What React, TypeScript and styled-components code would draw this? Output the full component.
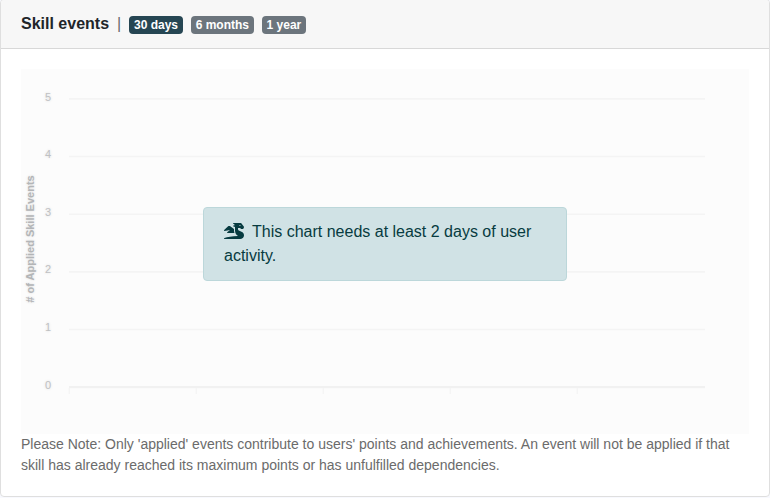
import React from 'react';
import styled, { createGlobalStyle } from 'styled-components';
import { FaDragon } from 'react-icons/fa';

const GlobalStyle = createGlobalStyle`
  *, *::before, *::after { box-sizing: border-box; }
  html { background: #f8f9fe; }
  body {
    margin: 0;
    overflow: hidden;
    font-family: "Liberation Sans", Arial, sans-serif;
    font-size: 16px;
    line-height: 24px;
    color: #212529;
  }
`;

const Card = styled.section`
  margin-top: -1px;
  height: 498px;
  display: flex;
  flex-direction: column;
  background: #fff;
  border: 1px solid #dfdfdf;
  border-radius: 4px;
  overflow: hidden;
`;

const Header = styled.header`
  display: flex;
  align-items: center;
  height: 49px;
  flex: none;
  padding: 0 20px 1px;
  background: #f7f7f7;
  border-bottom: 1px solid #d8d8d8;
`;

const Title = styled.h1`
  margin: 0;
  font-size: 16px;
  line-height: 24px;
  font-weight: 700;
`;

const Divider = styled.span`
  margin: 0 8px;
  color: #6b6b6b;
`;

const Ranges = styled.div`
  display: flex;
  gap: 8px;
  padding-top: 3px;
`;

const Range = styled.button<{ $active?: boolean }>`
  height: 18px;
  padding: 3px 4.8px;
  border: 0;
  border-radius: 4px;
  background: ${({ $active }) => ($active ? '#264653' : '#6c757d')};
  color: #fff;
  font: 700 12px/12px "Liberation Sans", Arial, sans-serif;
  white-space: nowrap;
`;

const Body = styled.div`
  padding: 20px;
`;

const ChartArea = styled.div`
  display: grid;
  height: 364.5px;
  background: #fcfcfc;
`;

const Chart = styled.svg`
  grid-area: 1 / 1;
  display: block;
  width: 728px;
  height: 364px;
  font-family: "Liberation Sans", Arial, sans-serif;
  font-size: 11px;
`;

const Soft = styled.g`
  filter: blur(0.4px);
`;

const Label = styled.text`
  fill: #bfc1c3;
  text-shadow: 0 0 3px rgba(0, 0, 0, 0.14);
`;

const AxisTitle = styled(Label)`
  fill: #b3b5b7;
  font-weight: 700;
`;

const Alert = styled.div`
  grid-area: 1 / 1;
  place-self: center;
  width: 364px;
  height: 74px;
  padding: 12px 20px;
  margin-bottom: 15px;
  background: #d0e2e5;
  border: 1px solid #bcd7da;
  border-radius: 4px;
  color: #073b40;
  z-index: 1;
`;

const DragonIcon = styled(FaDragon)`
  width: 20px;
  height: 16px;
  margin-right: 8px;
  vertical-align: -2px;
`;

const Note = styled.p`
  margin: 0;
  font-size: 14px;
  line-height: 21px;
  color: #6b6b6b;
`;

const levels = [5, 4, 3, 2, 1, 0];
const ticks = [48, 175, 302, 429, 556];

export default function App() {
  return (
    <>
      <GlobalStyle />
      <Card>
        <Header>
          <Title>Skill events</Title>
          <Divider>|</Divider>
          <Ranges>
            <Range $active>30 days</Range>
            <Range>6 months</Range>
            <Range>1 year</Range>
          </Ranges>
        </Header>
        <Body>
          <ChartArea>
            <Chart viewBox="0 0 728 364">
              <Soft>
                {levels.map((n, i) => (
                  <line key={n} x1="48" x2="684" y1={29.9 + i * 57.65} y2={29.9 + i * 57.65}
                    stroke={n === 0 ? '#f1f1f1' : '#f4f4f4'} strokeWidth={n === 0 ? 2.4 : 1.6} />
                ))}
                {ticks.map((x) => (
                  <line key={x} x1={x + 0.3} x2={x + 0.3} y1="319" y2="325" stroke="#f5f5f5" strokeWidth="1.5" />
                ))}
              </Soft>
              {levels.map((n, i) => (
                <Label key={n} x="27" y={Math.floor(32 + i * 57.6)} textAnchor="middle">{n}</Label>
              ))}
              <AxisTitle x="13" y="170" textAnchor="middle" transform="rotate(-90 13 170)">
                # of Applied Skill Events
              </AxisTitle>
            </Chart>
            <Alert>
              <DragonIcon />
              This chart needs at least 2 days of user activity.
            </Alert>
          </ChartArea>
          <Note>
            Please Note: Only 'applied' events contribute to users' points and achievements. An event
            will not be applied if that skill has already reached its maximum points or has
            unfulfilled dependencies.
          </Note>
        </Body>
      </Card>
    </>
  );
}
